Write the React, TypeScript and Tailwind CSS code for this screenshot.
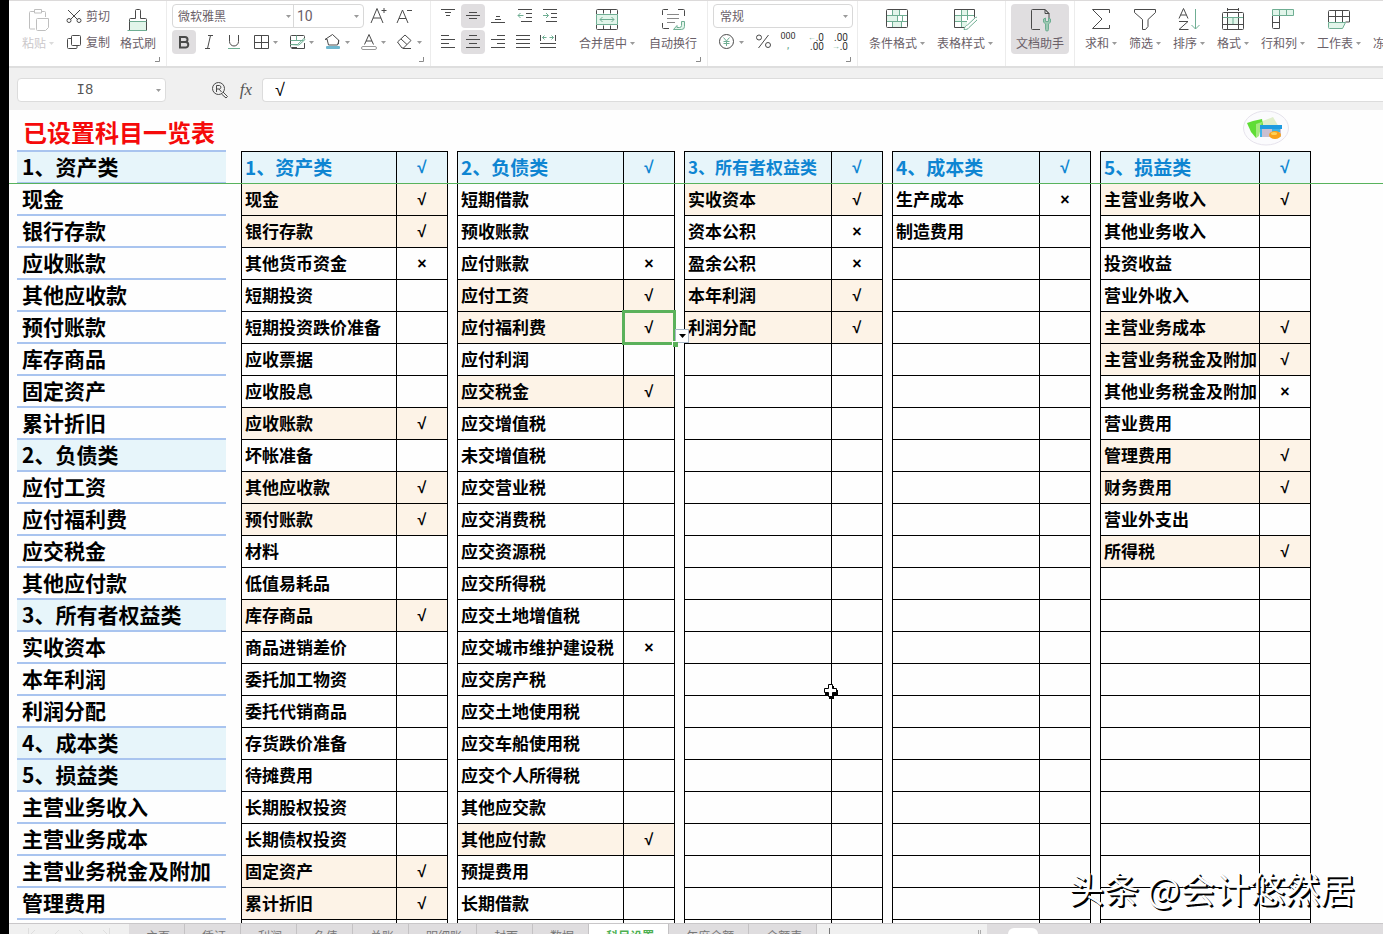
import React from "react";

type Row = [string, string?];

interface Category {
  title: string;
  width: string;
  nameCol: string;
  titleSize: string;
  rows: Row[];
}

const ROW_COUNT = 23;

const categories: Category[] = [
  {
    title: "1、资产类",
    width: "w-[207px]",
    nameCol: "w-[155px]",
    titleSize: "text-[19px]",
    rows: [
      ["现金", "√"], ["银行存款", "√"], ["其他货币资金", "×"], ["短期投资"], ["短期投资跌价准备"],
      ["应收票据"], ["应收股息"], ["应收账款", "√"], ["坏帐准备"], ["其他应收款", "√"],
      ["预付账款", "√"], ["材料"], ["低值易耗品"], ["库存商品", "√"], ["商品进销差价"],
      ["委托加工物资"], ["委托代销商品"], ["存货跌价准备"], ["待摊费用"], ["长期股权投资"],
      ["长期债权投资"], ["固定资产", "√"], ["累计折旧", "√"],
    ],
  },
  {
    title: "2、负债类",
    width: "w-[218px]",
    nameCol: "w-[166px]",
    titleSize: "text-[19px]",
    rows: [
      ["短期借款"], ["预收账款"], ["应付账款", "×"], ["应付工资", "√"], ["应付福利费", "√"],
      ["应付利润"], ["应交税金", "√"], ["应交增值税"], ["未交增值税"], ["应交营业税"],
      ["应交消费税"], ["应交资源税"], ["应交所得税"], ["应交土地增值税"], ["应交城市维护建设税", "×"],
      ["应交房产税"], ["应交土地使用税"], ["应交车船使用税"], ["应交个人所得税"], ["其他应交款"],
      ["其他应付款", "√"], ["预提费用"], ["长期借款"],
    ],
  },
  {
    title: "3、所有者权益类",
    width: "w-[199px]",
    nameCol: "w-[147px]",
    titleSize: "text-[17px]",
    rows: [["实收资本", "√"], ["资本公积", "×"], ["盈余公积", "×"], ["本年利润", "√"], ["利润分配", "√"]],
  },
  {
    title: "4、成本类",
    width: "w-[199px]",
    nameCol: "w-[147px]",
    titleSize: "text-[19px]",
    rows: [["生产成本", "×"], ["制造费用"]],
  },
  {
    title: "5、损益类",
    width: "w-[211px]",
    nameCol: "w-[159px]",
    titleSize: "text-[19px]",
    rows: [
      ["主营业务收入", "√"], ["其他业务收入"], ["投资收益"], ["营业外收入"], ["主营业务成本", "√"],
      ["主营业务税金及附加", "√"], ["其他业务税金及附加", "×"], ["营业费用"], ["管理费用", "√"],
      ["财务费用", "√"], ["营业外支出"], ["所得税", "√"],
    ],
  },
];

const overview = [
  "1、资产类", "现金", "银行存款", "应收账款", "其他应收款", "预付账款", "库存商品", "固定资产", "累计折旧",
  "2、负债类", "应付工资", "应付福利费", "应交税金", "其他应付款",
  "3、所有者权益类", "实收资本", "本年利润", "利润分配",
  "4、成本类", "5、损益类", "主营业务收入", "主营业务成本", "主营业务税金及附加", "管理费用",
];

const sheets = ["主页", "凭证", "利润", "负债", "总账", "明细账", "封面", "数据", "科目设置", "年度余额", "余额表"];

const GREEN = "#6fae93";
const MINT = "#e2f5ea";

function Icon({ children, size = 24 }: { children: React.ReactNode; size?: number }) {
  return (
    <svg width={size} height={size} viewBox={`0 0 ${size} ${size}`} fill="none" stroke="#4a4a4a" className="shrink-0" aria-hidden="true">
      {children}
    </svg>
  );
}

function Caret() {
  return (
    <svg width="5" height="3" viewBox="0 0 5 3" className="pointer-events-none shrink-0" aria-hidden="true">
      <path d="M0 0H5L2.5 3Z" fill="#9a9a9a" />
    </svg>
  );
}

function BigButton({ label, icon, caret = false, active = false, muted = false }: { label: string; icon: React.ReactNode; caret?: boolean; active?: boolean; muted?: boolean }) {
  return (
    <button
      type="button"
      className={`flex h-[50px] shrink-0 flex-col items-center gap-[3px] pt-1 ${active ? "rounded bg-[#e0dee0] px-[5px]" : ""} ${muted ? "opacity-35" : ""}`}
    >
      <Icon>{icon}</Icon>
      <span className="flex items-center gap-[3px] text-xs leading-4 whitespace-nowrap">
        {label}
        {caret && <Caret />}
      </span>
    </button>
  );
}

function ToolButton({ label, active = false, children }: { label: string; active?: boolean; children: React.ReactNode }) {
  return (
    <button type="button" aria-label={label} className={`flex size-6 shrink-0 items-center justify-center rounded ${active ? "bg-[#e0dee0]" : ""}`}>
      <Icon size={20}>{children}</Icon>
    </button>
  );
}

function DropTool({ label, children }: { label: string; children: React.ReactNode }) {
  return (
    <button type="button" aria-label={label} className="flex h-6 w-[35px] shrink-0 items-center gap-0.5">
      <Icon size={20}>{children}</Icon>
      <Caret />
    </button>
  );
}

function Group({ className, corner = false, label, children }: { className: string; corner?: boolean; label: string; children: React.ReactNode }) {
  return (
    <div role="group" aria-label={label} className={`relative flex shrink-0 border-r border-[#ececec] pt-[3px] ${className}`}>
      {children}
      {corner && (
        <svg width="5" height="5" viewBox="0 0 5 5" className="absolute right-1.5 bottom-1" aria-hidden="true">
          <path d="M4.5 0V4.5H0" fill="none" stroke="#8a8a8a" />
        </svg>
      )}
    </div>
  );
}

function Ribbon() {
  return (
    <header className="flex h-[68px] shrink-0 overflow-hidden border-t border-b-2 border-t-[#dcdada] border-b-[#dedede] bg-white text-[#6a6068]">
      <Group label="剪贴板" corner className="w-[158px] pl-[13px]">
        <BigButton label="粘贴" caret muted icon={
          <>
            <path d="M8 3.5H4.5a1 1 0 0 0-1 1V20a1 1 0 0 0 1 1H9M15 3.5h3.5a1 1 0 0 1 1 1V9" />
            <path d="M8.500 1.500h7v3.500h-7zM10.500 11.500a1 1 0 0 1 1-1h11v9l-3 3h-8a1 1 0 0 1-1-1z" />
          </>
        } />
        <div className="ml-3 flex flex-col gap-0.5">
          <button type="button" className="flex h-6 items-center gap-1 text-xs whitespace-nowrap">
            <Icon size={16}>
              <path d="M2 2l9.500 9.500M14 2l-9.500 9.500" />
              <circle cx="3" cy="12.500" r="2" /><circle cx="13" cy="12.500" r="2" />
            </Icon>
            剪切
          </button>
          <button type="button" className="flex h-6 items-center gap-1 text-xs whitespace-nowrap">
            <Icon size={16}>
              <rect x="5.500" y="1.500" width="9" height="10" rx="1" />
              <path d="M5.500 4.500h-3a1 1 0 0 0-1 1v8a1 1 0 0 0 1 1h7.500a1 1 0 0 0 1-1v-2" />
            </Icon>
            复制
          </button>
        </div>
        <div className="ml-2.5">
          <BigButton label="格式刷" icon={
            <>
              <rect x="3" y="13" width="18" height="9" fill={MINT} stroke="none" />
              <path d="M3.500 22V11.500a1 1 0 0 1 1-1H9.500V2.500a1 1 0 0 1 1-1h3a1 1 0 0 1 1 1v8h5a1 1 0 0 1 1 1V22" />
              <path d="M3.500 13.500h17M1.500 22.500H21" stroke={GREEN} />
            </>
          } />
        </div>
      </Group>

      <Group label="字体" corner className="w-[264px] flex-col gap-0.5 pl-[5px]">
        <div className="flex">
          <div className="flex h-6 w-[192px] items-center rounded border border-[#d8d8d8] text-xs">
            <select aria-label="字体" className="min-w-0 flex-1 appearance-none pl-[5px] outline-none">
              <option>微软雅黑</option>
            </select>
            <Caret />
            <span className="ml-0.5 h-full w-px bg-[#d8d8d8]" />
            <select aria-label="字号" className="w-15 appearance-none pl-[3px] font-['Roboto','Noto_Sans_CJK_SC',sans-serif] text-sm outline-none">
              <option>10</option>
            </select>
            <Caret />
            <span className="w-1" />
          </div>
          <div className="ml-[3px] flex gap-0.5">
            <ToolButton label="增大字号">
              <path d="M2 17L8 2.500L14 17M4 12h8M12.500 4.500h5M15 2v5" />
            </ToolButton>
            <ToolButton label="减小字号">
              <path d="M2 17L7.500 4L13 17M4 12.500h7M12 4.500h5" />
            </ToolButton>
          </div>
        </div>
        <div className="flex items-center gap-px">
          <ToolButton label="加粗" active>
            <path d="M6 5v10.500h5.500a2.750 2.750 0 0 0 0-5.500H6h5a2.400 2.400 0 0 0 0-5z" strokeWidth="2" />
          </ToolButton>
          <ToolButton label="倾斜"><path d="M9 3.500h5M6 16.500h5M11.500 3.500l-3 13" /></ToolButton>
          <ToolButton label="下划线">
            <path d="M5.500 3v6.500a4.500 4.500 0 0 0 9 0V3" />
            <path d="M4 16.500h12" stroke={GREEN} />
          </ToolButton>
          <div className="ml-1 flex gap-px">
            <DropTool label="边框"><path d="M3.500 3.500h14v13h-14zM10.500 3.500v13M3.500 10.500h14" /></DropTool>
            <DropTool label="绘制边框">
              <path d="M10 15.500H4.500a1 1 0 0 1-1-1v-10a1 1 0 0 1 1-1h12a1 1 0 0 1 1 1v2M17.500 11v5.500h-13" />
              <path d="M3.500 8.500h13M9.500 3.500v5M3.500 12.500h7l6.500-6 1 1-6 5.500z" stroke={GREEN} />
            </DropTool>
            <DropTool label="填充颜色">
              <path d="M2 7.500L9.500 2.500l6.500 6-1.500 4.500h-9L4 7zM15.500 8v4" />
              <rect x="3" y="14" width="14" height="3" rx="1" fill="#6fb7cf" stroke="none" />
            </DropTool>
            <DropTool label="字体颜色">
              <path d="M5.500 12.500L10 2.500l4.500 10M7 9h6" />
              <rect x="2.500" y="14.500" width="15" height="3" rx="1.500" stroke="#999" />
            </DropTool>
            <DropTool label="清除">
              <path d="M2.500 10L10 3l6 5.500L8.500 16H7zM6 7l6 5.500M8 16.500h8" />
            </DropTool>
          </div>
        </div>
      </Group>

      <Group label="对齐方式" corner className="w-[277px] pl-[5px]">
        <div className="flex flex-col gap-0.5">
          <div className="flex gap-px">
            <ToolButton label="顶端对齐"><path d="M3 3.500h14M7 6.500h6M8 9.500h4" /></ToolButton>
            <ToolButton label="垂直居中" active><path d="M6 6.500h8M3 9.500h14M6 12.500h8" /></ToolButton>
            <ToolButton label="底端对齐"><path d="M8 10.500h4M7 13.500h6M3 16.500h14" /></ToolButton>
            <div className="ml-0.5 flex gap-px">
              <ToolButton label="减少缩进">
                <path d="M3 3.500h14M11 7.500h6M11 11.500h6M6 15.500h11" />
                <path d="M8.500 9.500H3M5.500 7L3 9.500L5.500 12" stroke={GREEN} />
              </ToolButton>
              <ToolButton label="增加缩进">
                <path d="M3 3.500h14M11 7.500h6M11 11.500h6M6 15.500h11" />
                <path d="M3 9.500h5.500M6 7l2.500 2.500L6 12" stroke={GREEN} />
              </ToolButton>
            </div>
          </div>
          <div className="flex gap-px">
            <ToolButton label="左对齐" ><path d="M3 3.500h8M3 7.500h14M3 11.500h8M3 15.500h14" /></ToolButton>
            <ToolButton label="水平居中" active><path d="M6 3.500h8M3 7.500h14M6 11.500h8M3 15.500h14" /></ToolButton>
            <ToolButton label="右对齐"><path d="M9 3.500h8M3 7.500h14M9 11.500h8M3 15.500h14" /></ToolButton>
            <ToolButton label="两端对齐"><path d="M3 3.500h14M3 7.500h14M3 11.500h14M3 15.500h14" /></ToolButton>
            <ToolButton label="分散对齐">
              <path d="M2.500 3v6M17.500 3v6M2 11.500h16M2 15.500h16" />
              <path d="M4.500 5.500h4M11.500 5.500h4M6.500 3.500l-2 2 2 2M13.500 3.500l2 2-2 2" stroke={GREEN} />
            </ToolButton>
          </div>
        </div>
        <div className="ml-[17px] flex gap-3.5">
          <BigButton label="合并居中" caret icon={
            <>
              <rect x="1" y="6" width="22" height="11" fill={MINT} stroke="none" />
              <path d="M1.500 6V2.500a1 1 0 0 1 1-1h19a1 1 0 0 1 1 1V6M1.500 17v3.500a1 1 0 0 0 1 1h19a1 1 0 0 0 1-1V17M8.500 1.500v4M15.500 1.500v4M8.500 17.500v4M15.500 17.500v4" />
              <path d="M1.500 6.500h21v10h-21zM5 11.500h14M7.500 9L5 11.500L7.500 14M16.500 9l2.500 2.500-2.500 2.500" stroke={GREEN} />
            </>
          } />
          <BigButton label="自动换行" icon={
            <>
              <path d="M1.500 7V2.500a1 1 0 0 1 1-1H7M17 1.500h5.500a1 1 0 0 1 1 1V8M1.500 15v4.500a1 1 0 0 0 1 1H8" />
              <path d="M6 6.500h12M6 10.500h12M6 14.500h8" stroke="#888" />
              <path d="M20.500 13.500h3v5a3 3 0 0 1-3 3h-8l3.500-4v2h2.500a2 2 0 0 0 2-2z" stroke={GREEN} fill={MINT} />
            </>
          } />
        </div>
      </Group>

      <Group label="数字" corner className="w-[150px] flex-col gap-0.5 pl-[5px]">
        <div className="flex h-6 w-[140px] items-center rounded border border-[#d8d8d8] pr-1 text-xs">
          <select aria-label="数字格式" className="min-w-0 flex-1 appearance-none pl-1.5 outline-none">
            <option>常规</option>
          </select>
          <Caret />
        </div>
        <div className="flex pl-1">
          <DropTool label="货币">
            <circle cx="9.500" cy="9.500" r="7" />
            <path d="M6.500 5.500l3 3.500 3-3.500M9.500 9v5M6.500 9.500h6M6.500 11.500h6" stroke={GREEN} />
          </DropTool>
          <ToolButton label="百分比">
            <circle cx="5" cy="5.500" r="2.500" /><circle cx="14" cy="13" r="2.500" /><path d="M14.500 3L4.500 16" />
          </ToolButton>
          <button type="button" aria-label="千位分隔" className="flex h-6 w-6 flex-col items-center font-['Roboto',sans-serif] text-[9px] leading-[9px] text-[#333]">
            <span className="pt-0.5">000</span><span className="font-bold text-[#6fae93]">,</span>
          </button>
          <button type="button" aria-label="增加小数位" className="ml-1 flex h-6 w-6 flex-col items-end justify-center pr-1 font-['Roboto',sans-serif] text-[10px] leading-[9px] text-[#333]">
            <span className="flex"><span className="text-[8px] text-[#6fae93]">←</span>.0</span><span>.00</span>
          </button>
          <button type="button" aria-label="减少小数位" className="flex h-6 w-6 flex-col items-end justify-center pr-1 font-['Roboto',sans-serif] text-[10px] leading-[9px] text-[#333]">
            <span>.00</span><span className="flex"><span className="text-[8px] text-[#6fae93]">→</span>.0</span>
          </button>
        </div>
      </Group>

      <Group label="样式" className="w-[148px] gap-3 pl-[11px]">
        <BigButton label="条件格式" caret icon={
          <>
            <path d="M8 2h7v6H8zM2 8h11v6H2zM8 14h9v6H8z" fill={MINT} stroke="none" />
            <rect x="1.500" y="1.500" width="21" height="18" rx="1" />
            <path d="M2 7.500h20M2 13.500h20M7.500 2v5M14.500 2v5M12.500 8v5M17.500 8v5M7.500 14v5M16.500 14v5" stroke={GREEN} />
          </>
        } />
        <BigButton label="表格样式" caret icon={
          <>
            <path d="M1.500 1.500h20v8M12 19.500H1.500v-18" />
            <path d="M2 8h7v6H2zM9 2h6v6H9zM9 14h5v5H9z" fill={MINT} stroke="none" />
            <path d="M2 7.500h19M2 13.500h12M8.500 2v17M14.500 2v10" stroke={GREEN} />
            <path d="M11 21.500c1-4 3-4 4-5l7.500-7c1.500-1 3 1 1.500 2.500l-8 7.500c-1 2-3 2-5 2z" stroke={GREEN} fill="#fff" />
          </>
        } />
      </Group>

      <Group label="助手" className="w-[69px] pl-[5px]">
        <BigButton label="文档助手" active icon={
          <>
            <path d="M12 21.500H4.500a1 1 0 0 1-1-1v-18a1 1 0 0 1 1-1H17l4 4V10M17 1.500v4h4z" />
            <path d="M15.500 11v3l2 2v5.500a1.500 1.500 0 0 0 3 0V16l2-2v-3l-2-1v3.500h-3V10z" stroke={GREEN} fill="#9cc8b2" />
          </>
        } />
      </Group>

      <div role="group" aria-label="编辑" className="flex min-w-0 flex-1 gap-3 overflow-hidden pt-[3px] pl-2.5">
        <BigButton label="求和" caret icon={<path d="M20.500 5V1.500H3.500L13 11L3.500 20.500h17V17" />} />
        <BigButton label="筛选" caret icon={<path d="M1.500 1.500h21v3L15 11.500v7L12.500 21.500h-3v-10L1.500 4.500z" />} />
        <BigButton label="排序" caret icon={
          <>
            <path d="M2 10.500L6.500 0.500L11 10.500M3.500 7h6M2 13.500h9L2 21.500h9.500" />
            <path d="M18.500 1v20M14.500 17l4 4 4-4" stroke={GREEN} />
          </>
        } />
        <BigButton label="格式" caret icon={
          <>
            <rect x="6" y="9" width="12" height="7" fill={MINT} stroke="none" />
            <rect x="1.500" y="4.500" width="21" height="17" rx="1" />
            <path d="M6.500 1.500h11M6.500 0v3M17.500 0v3M6.500 5v16M17.500 5v16M2 16.500h20" />
            <path d="M2 9.500h20M12 9v7" stroke={GREEN} />
          </>
        } />
        <BigButton label="行和列" caret icon={
          <>
            <path d="M1.500 8v11.500a1 1 0 0 0 1 1H8.500V8M2 14.500h6" />
            <path d="M1.500 1.500h21v6h-21zM8.500 1.500v6M15.500 1.500v6" stroke={GREEN} fill={MINT} />
          </>
        } />
        <BigButton label="工作表" caret icon={
          <>
            <path d="M1.500 14V3.500a1 1 0 0 1 1-1h19a1 1 0 0 1 1 1v10.500h-4M2 8.500h20M8.500 3v11M15.500 3v11" />
            <path d="M1.500 14.500h17l-3 6h-13a1 1 0 0 1-1-1z" stroke={GREEN} fill={MINT} />
          </>
        } />
        <BigButton label="冻结窗格" caret icon={<path d="M1.500 2.500h21v18h-21z" stroke="none" />} />
      </div>
    </header>
  );
}

function FormulaBar() {
  return (
    <div className="flex h-[42px] shrink-0 items-center overflow-hidden bg-[#f0f0f0] pt-0.5 pl-2 text-[#555]">
      <div className="flex h-6 w-[149px] shrink-0 items-center rounded border border-[#dcdcdc] bg-white pr-1">
        <input aria-label="名称框" defaultValue="I8" className="min-w-0 flex-1 pr-1 text-center font-['Liberation_Mono',monospace] text-sm outline-none" />
        <Caret />
      </div>
      <button type="button" aria-label="查找" className="ml-11 shrink-0">
        <Icon size={20}>
          <circle cx="8.500" cy="8.500" r="6" />
          <path d="M6.500 12V5.500h3a1.800 1.800 0 0 1 0 3.500h-3M9 9l2.500 3M13 12l4.500 4.500-1.500 1.500L11.500 14" />
        </Icon>
      </button>
      <button type="button" aria-label="插入函数" className="ml-1 w-6 shrink-0 font-['Liberation_Serif',serif] text-[17px] italic">fx</button>
      <input
        aria-label="编辑栏"
        defaultValue="√"
        className="ml-1 h-6 min-w-0 flex-1 rounded-l border border-r-0 border-[#dcdcdc] bg-white pl-3 font-['Liberation_Sans',sans-serif] text-lg text-black outline-none"
      />
    </div>
  );
}

function OverviewTable() {
  return (
    <table className="w-[209px] shrink-0 table-fixed border-separate border-spacing-0 border-t-2 border-[#a9c4ef]">
      <tbody>
        {overview.map((name) => (
          <tr key={name} className="h-8">
            <td className={`border-b-2 border-[#a9c4ef] p-0 pb-0.5 pl-[5px] text-[21px] leading-7 whitespace-nowrap ${name.includes("、") ? "bg-[#e7f5fa]" : ""}`}>
              {name}
            </td>
          </tr>
        ))}
      </tbody>
    </table>
  );
}

function SelectionFrame() {
  return (
    <>
      <span className="absolute -inset-0.5 border-[3px] border-[#5bb15b]" />
      <span className="absolute -right-1 -bottom-1 z-20 size-1.5 border-t border-l border-white bg-[#5bb15b]" />
      <button type="button" aria-label="打开下拉列表" className="absolute -right-[15px] bottom-0 z-10 flex size-3.5 items-center justify-center border border-[#a9b8c8] bg-white">
        <svg width="7" height="4" viewBox="0 0 7 4" aria-hidden="true"><path d="M0 0H7L3.500 4Z" fill="#000" /></svg>
      </button>
    </>
  );
}

function CategoryTable({ data }: { data: Category }) {
  const rows: Row[] = Array.from({ length: ROW_COUNT + 1 }, (_, i) => data.rows[i] ?? [""]);
  return (
    <table className={`mt-px shrink-0 table-fixed border-separate border-spacing-0 border-t border-l border-black text-[17px] leading-[29px] ${data.width}`}>
      <colgroup>
        <col className={data.nameCol} />
        <col className="w-[51px]" />
      </colgroup>
      <thead className="bg-[#e7f5fa] text-[#0e85d2]">
        <tr className="h-8">
          <th className={`border-r border-b border-black p-0 pb-0.5 pl-[3px] text-left whitespace-nowrap ${data.titleSize}`}>{data.title}</th>
          <th className="border-r border-b border-black p-0 text-center font-['Liberation_Sans',sans-serif]">√</th>
        </tr>
      </thead>
      <tbody>
        {rows.map(([name, mark], i) => (
          <tr key={i} className={`h-8 ${mark === "√" ? "bg-[#fdf3e7]" : ""}`}>
            <td className="border-r border-b border-black p-0 pb-0.5 pl-[3px] whitespace-nowrap">{name}</td>
            <td className="relative border-r border-b border-black p-0 text-center font-['Liberation_Sans',sans-serif] text-base">
              {mark}
              {name === "应付福利费" && <SelectionFrame />}
            </td>
          </tr>
        ))}
      </tbody>
    </table>
  );
}

function Badge() {
  return (
    <svg width="48" height="38" viewBox="0 0 48 38" className="absolute top-0 left-[1234px]" aria-hidden="true">
      <ellipse cx="23" cy="18" rx="22.500" ry="17" fill="#fbfbfd" stroke="#e6e3ec" />
      <path d="M17 12L30 7L36 17L20 26Z" fill="#dfeecb" />
      <path d="M4 13L10 11L19 9L20 15L13 28L8 22Z" fill="#5fdd35" />
      <path d="M13 14L19 12L16 26L13 28Z" fill="#a3ea7e" />
      <rect x="17" y="15" width="21" height="12" fill="#c9bfd0" />
      <rect x="17" y="15" width="22" height="4" fill="#1d9be0" />
      <path d="M17 19h2v8h-2zM29 19h8v3h-8z" fill="#3fb3e8" />
      <ellipse cx="32" cy="25" rx="6" ry="4" fill="#f9a21b" />
      <ellipse cx="31" cy="23.500" rx="3" ry="1.500" fill="#ffd257" />
    </svg>
  );
}

function SheetTabs() {
  return (
    <footer className="flex h-[11px] shrink-0 items-start overflow-hidden border-t border-[#c9c7c9] bg-[#f0f0f0] text-xs text-[#777]">
      <div className="flex w-[120px] shrink-0 justify-center pt-1">
        <svg width="86" height="14" viewBox="0 0 86 14" fill="none" stroke="#dedede" aria-hidden="true">
          <path d="M2.500 0v14M9 2L4 7l5 5M33 2l-5 5 5 5M53 2l5 5-5 5M77 2l5 5-5 5M83.500 0v14" />
        </svg>
      </div>
      <nav aria-label="工作表" className="flex">
        {sheets.map((name) => (
          <button
            key={name}
            type="button"
            className={`h-6 shrink-0 border-r border-[#c4c2c4] pr-3.5 pl-[17px] whitespace-nowrap ${name === "科目设置" ? "bg-white font-bold text-[#4caf50]" : "bg-[#dfdddf]"}`}
          >
            {name}
          </button>
        ))}
      </nav>
      <span className="mt-1 ml-3 h-6 w-px shrink-0 bg-[#777]" />
      <div className="ml-auto flex h-6 w-[405px] items-start">
        <span className="mt-1.5 h-4 w-[3px] border-x border-[#aaa]" />
        <div className="ml-1.5 flex h-6 flex-1 items-start bg-[#dfdddf] pt-1 pl-[21px]">
          <span className="h-4 w-[30px] rounded-md bg-white" />
        </div>
      </div>
    </footer>
  );
}

export default function App() {
  return (
    <div className="flex h-screen overflow-hidden bg-black pl-[9px] font-['Noto_Sans_CJK_SC',sans-serif]">
      <div className="flex min-w-0 flex-1 flex-col bg-white">
        <Ribbon />
        <FormulaBar />
        <main className="relative min-h-0 flex-1 overflow-hidden bg-[#fefefe] pl-2 font-bold text-black">
          <h1 className="h-10 pt-1.5 pl-1.5 text-2xl leading-8 text-[#f50a0a]">已设置科目一览表</h1>
          <div className="flex items-start">
            <OverviewTable />
            <div className="ml-[15px] flex gap-[9px]">
              {categories.map((c) => (
                <CategoryTable key={c.title} data={c} />
              ))}
            </div>
          </div>
          <div className="absolute top-[73px] right-0 left-0 h-px bg-[#58b35c]" />
          <Badge />
          <svg width="16" height="16" viewBox="0 0 16 16" className="absolute top-[574px] left-[814px]" aria-hidden="true">
            <path d="M6 2h5v4h4v5h-4v4H6v-4H2V6h4z" fill="#000" />
            <path d="M5.500 0.500h4v4h4v4h-4v4h-4v-4h-4v-4h4z" fill="#fff" stroke="#000" />
          </svg>
          <p className="absolute right-7 bottom-2.5 text-[35px] leading-[50px] font-normal whitespace-nowrap text-white [text-shadow:1px_1px_0_#000,2px_2px_0_#000]">
            头条 @会计悠然居
          </p>
        </main>
        <SheetTabs />
      </div>
    </div>
  );
}
